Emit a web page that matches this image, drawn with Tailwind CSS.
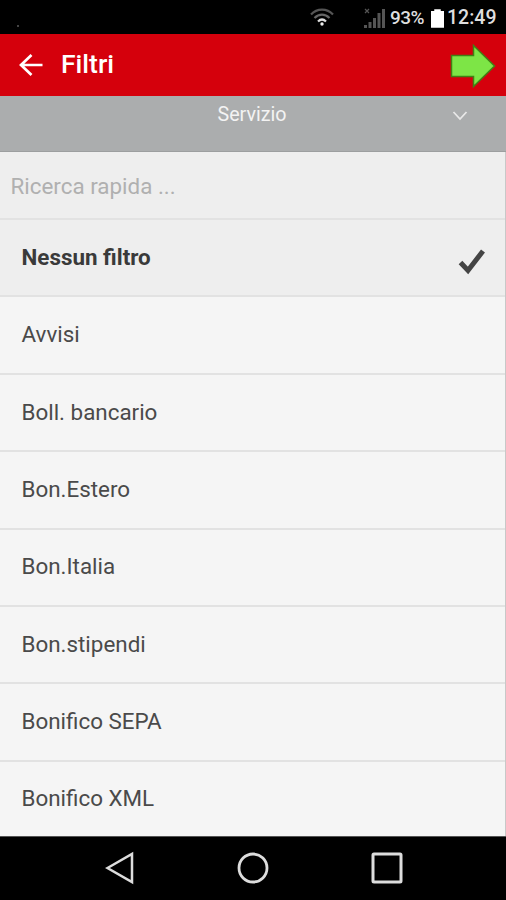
<!DOCTYPE html>
<html lang="it">
<head>
<meta charset="utf-8">
<title>Filtri</title>
<script src="https://cdn.jsdelivr.net/npm/@tailwindcss/browser@4"></script>
</head>
<body class="w-[506px] h-[900px] overflow-hidden bg-black font-[Roboto,sans-serif]">
<div class="flex flex-col w-full h-full">
  <div class="h-[34px] shrink-0 flex items-center justify-end bg-black text-[#dedede] pr-[9px] pt-[2px]">
    <span class="mr-auto ml-[17px] mt-[16px] w-[2px] h-[2px] bg-[#444]"></span>
    <svg class="mr-[30px]" width="24" height="20" viewBox="0 0 24 20" fill="none" stroke-width="2.2"><path d="M1 6.500C7 0 17 0 23 6.500" stroke="#555"/><path d="M4.500 10C9 5.500 15 5.500 19.500 10" stroke="#666"/><path d="M8 13.500C10.500 11 13.500 11 16 13.500" stroke="#ddd"/><circle cx="12" cy="16" r="1.700" fill="#eee"/></svg>
    <svg class="mr-[5px]" width="21" height="21" viewBox="0 0 21 21"><g fill="#555"><path d="M0 17h3v3H0zM4.500 14h3v6h-3zM9 10h3v10H9zM13.500 5h3v15h-3zM18 1h3v19h-3z"/></g><path d="M1 1l4 4M5 1L1 5" stroke="#555" stroke-width="1.200"/></svg>
    <span class="text-[19px] leading-[20px] w-[35px] tracking-[-0.500px] font-medium whitespace-nowrap">93%</span>
    <svg class="ml-[5.500px] mr-[3.500px]" width="13" height="19" viewBox="0 0 14 20"><path d="M3.500 0h7v2H14v18H0V2h3.500z" fill="#fff"/></svg>
    <span class="text-[19.500px] leading-[20px] w-[50px] font-medium whitespace-nowrap">12:49</span>
  </div>
  <div class="h-[62px] shrink-0 flex items-center bg-[#d5000c] text-white pl-[19px] pr-[10px]">
    <svg width="24" height="24" viewBox="0 0 24 24" fill="none" stroke="#fff" stroke-width="2.700"><path d="M12.500 2L2 12l10.500 10M2 12h21.500"/></svg>
    <h1 class="ml-[18px] mb-[2px] text-[26.500px] leading-[30px] font-medium">Filtri</h1>
    <svg class="ml-auto mt-[2px]" width="46" height="44" viewBox="0 0 46 44"><path d="M1.500 11.500h22V1.500L44.500 22 23.500 42.500V32.500h-22z" fill="#7de546" stroke="#418114" stroke-width="1.500"/></svg>
  </div>
  <div class="h-[56px] shrink-0 relative flex justify-center bg-[#abadae] border-b border-[#9c9e9f] pt-[8px] text-[#f3f3f3]">
    <span class="text-[19.700px] leading-[22px] -ml-[2px]">Servizio</span>
    <svg class="absolute left-[452px] top-[14px]" width="16" height="12" viewBox="0 0 16 12" fill="none" stroke="#e8e8e8" stroke-width="1.800"><path d="M1.500 2L8 9l6.500-7"/></svg>
  </div>
  <div class="h-[684px] shrink-0 flex flex-col bg-[#f5f5f5] border-r border-[#c8c8c8] text-[#4a4a4a] text-[22.400px] leading-[26px] whitespace-nowrap">
    <div class="h-[68px] shrink-0 flex items-center bg-[#eee] border-b-2 border-[#e2e2e2] pl-[10.500px] pt-[1px] text-[#b0b0b0]"><span>Ricerca rapida ...</span></div>
    <div class="h-[77.400px] shrink-0 flex items-center justify-between bg-[#eee] border-b-2 border-[#e2e2e2] pl-[21.500px] pr-[18px] text-[#3a3a3a]"><span class="font-bold mb-[2px]">Nessun filtro</span>
      <svg class="mt-[9px]" width="30" height="28" viewBox="0 0 30 28" fill="none" stroke="#444" stroke-width="5"><path d="M3.500 14.500l7.500 8L26 3"/></svg></div>
    <div class="h-[77.400px] shrink-0 flex items-center border-b-2 border-[#e2e2e2] pl-[21.500px] pb-[2px]"><span>Avvisi</span></div>
    <div class="h-[77.400px] shrink-0 flex items-center border-b-2 border-[#e2e2e2] pl-[21.500px] pb-[1px]"><span>Boll. bancario</span></div>
    <div class="h-[77.400px] shrink-0 flex items-center border-b-2 border-[#e2e2e2] pl-[21.500px] pb-[2px]"><span>Bon.Estero</span></div>
    <div class="h-[77.400px] shrink-0 flex items-center border-b-2 border-[#e2e2e2] pl-[21.500px] pb-[2px]"><span>Bon.Italia</span></div>
    <div class="h-[77.400px] shrink-0 flex items-center border-b-2 border-[#e2e2e2] pl-[21.500px] pb-[2px]"><span>Bon.stipendi</span></div>
    <div class="h-[77.400px] shrink-0 flex items-center border-b-2 border-[#e2e2e2] pl-[21.500px] pb-[2px]"><span>Bonifico SEPA</span></div>
    <div class="h-[74.200px] shrink-0 flex items-center pl-[21.500px] pb-[1px]"><span>Bonifico XML</span></div>
  </div>
  <div class="grow flex items-center bg-black border-t border-[#555] pl-[105px] pb-[2px]">
    <svg width="30" height="34" viewBox="0 0 30 34" fill="none" stroke="#ddd" stroke-width="2.500"><path d="M2.500 17L27 3v28z"/></svg>
    <svg class="ml-[101px]" width="34" height="34" viewBox="0 0 34 34" fill="none" stroke="#ddd" stroke-width="2.800"><circle cx="17" cy="17" r="14"/></svg>
    <svg class="ml-[100px]" width="34" height="34" viewBox="0 0 34 34" fill="none" stroke="#ddd" stroke-width="3"><rect x="3" y="3" width="28" height="28" rx="1"/></svg>
  </div>
</div>
</body>
</html>
